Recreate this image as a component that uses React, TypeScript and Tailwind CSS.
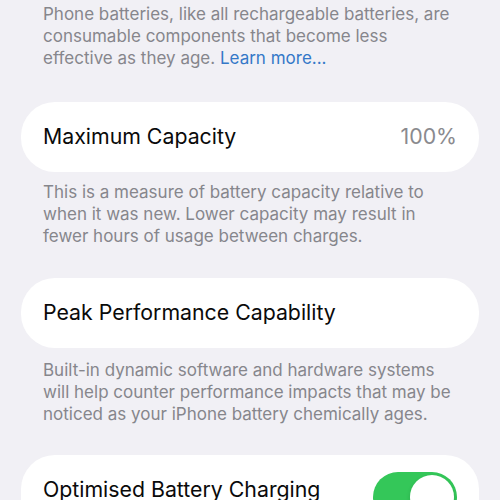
import React from "react";

const font = { fontFamily: "Inter, 'Noto Sans', sans-serif" };

function Card({ children }: { children: React.ReactNode }) {
  return (
    <div className="mx-[21px] bg-white rounded-[34px] h-[70px] flex items-center justify-between pl-[22px] pr-[22px]">
      {children}
    </div>
  );
}

function Desc({ children }: { children: React.ReactNode }) {
  return (
    <p className="px-[43px] text-[17px] leading-[22px] text-[#86868c]">
      {children}
    </p>
  );
}

export default function App() {
  return (
    <div
      className="w-[500px] h-[500px] overflow-hidden bg-[#f1f0f5] pt-[3px]"
      style={font}
    >
      <Desc>
        Phone batteries, like all rechargeable batteries, are consumable components that become less
        effective as they age. <span className="text-[#3478c8]">Learn more...</span>
      </Desc>
      <div className="h-[33px]" />
      <Card>
        <span className="text-[21.3px] text-[#0a0a0a]">Maximum Capacity</span>
        <span className="text-[21.3px] text-[#8a8a8e]">100%</span>
      </Card>
      <div className="h-[9px]" />
      <Desc>
        This is a measure of battery capacity relative to when it was new. Lower capacity may result in
        fewer hours of usage between charges.
      </Desc>
      <div className="h-[31px]" />
      <Card>
        <span className="text-[21.3px] text-[#0a0a0a]">Peak Performance Capability</span>
      </Card>
      <div className="h-[11px]" />
      <Desc>
        Built-in dynamic software and hardware systems will help counter performance impacts that may be
        noticed as your iPhone battery chemically ages.
      </Desc>
      <div className="h-[30px]" />
      <div className="mx-[21px] bg-white rounded-t-[34px] h-[90px] flex items-start justify-between pl-[22px] pr-[22px]">
        <span className="text-[21.3px] text-[#0a0a0a] h-[70px] flex items-center">
          Optimised Battery Charging
        </span>
        <div className="mt-[17px] w-[84px] h-[50px] rounded-full bg-[#34c759] p-[3px] flex justify-end">
          <div className="w-[44px] h-[44px] rounded-full bg-white shadow-[0_2px_4px_rgba(0,0,0,0.15)]" />
        </div>
      </div>
    </div>
  );
}
